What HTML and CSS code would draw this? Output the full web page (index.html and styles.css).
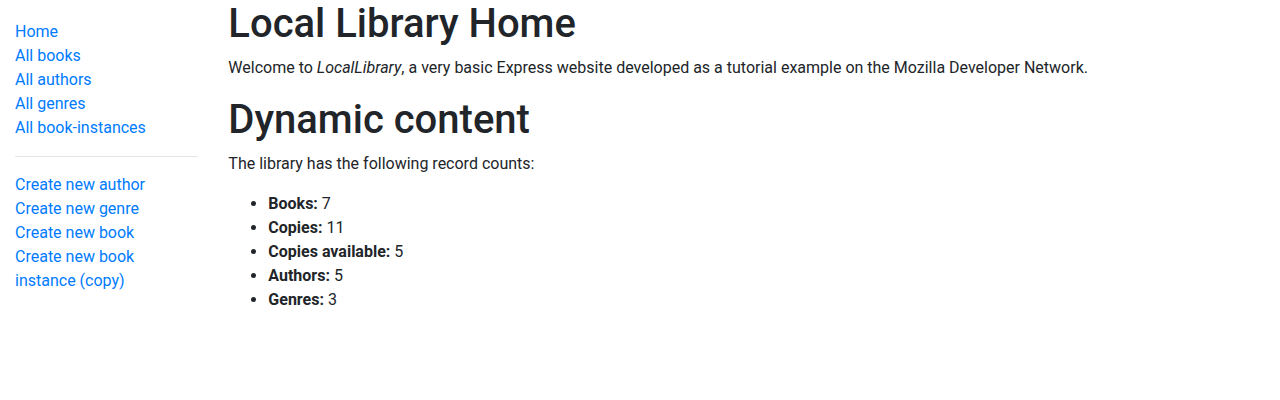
FILE: index.html
```html
<!DOCTYPE html>
<html lang="en">
<head>
<meta charset="utf-8">
<title>Local Library</title>
<link rel="stylesheet" href="styles.css">
</head>
<body>
<div class="container">
  <div class="row">
    <div class="col-side">
      <ul class="sidebar-nav">
        <li><a href="#">Home</a></li>
        <li><a href="#">All books</a></li>
        <li><a href="#">All authors</a></li>
        <li><a href="#">All genres</a></li>
        <li><a href="#">All book-instances</a></li>
        <li><hr></li>
        <li><a href="#">Create new author</a></li>
        <li><a href="#">Create new genre</a></li>
        <li><a href="#">Create new book</a></li>
        <li><a href="#">Create new book instance (copy)</a></li>
      </ul>
    </div>
    <div class="col-main">
      <h1>Local Library Home</h1>
      <p>Welcome to <em>LocalLibrary</em>, a very basic Express website developed as a tutorial example on the Mozilla Developer Network.</p>
      <h1>Dynamic content</h1>
      <p>The library has the following record counts:</p>
      <ul class="counts">
        <li><strong>Books:</strong> 7</li>
        <li><strong>Copies:</strong> 11</li>
        <li><strong>Copies available:</strong> 5</li>
        <li><strong>Authors:</strong> 5</li>
        <li><strong>Genres:</strong> 3</li>
      </ul>
    </div>
  </div>
</div>
</body>
</html>
```

FILE: styles.css
```css
* { box-sizing: border-box; }
html, body { margin: 0; }
body {
  font-family: Roboto, "Liberation Sans", sans-serif;
  font-size: 16px;
  line-height: 1.5;
  color: #212529;
  background: #fff;
}
.container { padding: 0 15px; width: 100%; }
.row { display: flex; margin: 0 -15px; }
.col-side { flex: 0 0 16.666667%; max-width: 16.666667%; padding: 0 15px; }
.col-main { flex: 0 0 83.333333%; max-width: 83.333333%; padding: 0 15px; }
a { color: #007bff; text-decoration: none; }
.sidebar-nav { margin: 20px 0 0; padding: 0; list-style: none; }
hr {
  box-sizing: content-box;
  height: 0;
  margin: 16px 0;
  border: 0;
  border-top: 1px solid rgba(0,0,0,.1);
}
h1 {
  font-size: 40px;
  font-weight: 500;
  line-height: 1.2;
  margin: 0 0 8px;
}
p { margin: 0 0 16px; }
.counts { margin: 0 0 16px; padding-left: 40px; }
strong { font-weight: bolder; }
```
